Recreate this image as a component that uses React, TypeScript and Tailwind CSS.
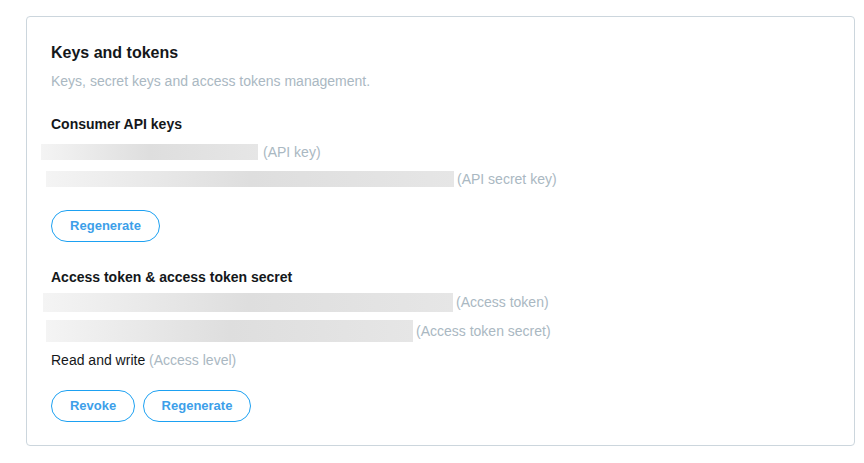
/**
 * Developer portal: "Keys and tokens" card with redacted credential rows.
 */

type RowProps = {
  offset: string;
  width: string;
  height: string;
  gap: string;
  label: string;
};

function Redacted({ offset, width, height, gap, label }: RowProps) {
  return (
    <div className="flex items-center">
      <div
        className={`${offset} ${width} ${height} shrink-0 bg-gradient-to-r from-[#f4f4f4] via-[#dedede] to-[#e6e6e6]`}
      />
      <span className={`${gap} whitespace-nowrap text-[14px] leading-5 text-[#aab8c2]`}>{label}</span>
    </div>
  );
}

function PillButton({ label, width }: { label: string; width: string }) {
  return (
    <button
      type="button"
      className={`${width} h-8 rounded-full border border-[#1da1f2] bg-white text-[13px] font-bold text-[#3d9fe9]`}
    >
      {label}
    </button>
  );
}

export default function App() {
  return (
    <div
      className="min-h-[463px] w-[864px] bg-white pl-[26px] pt-4"
      style={{ fontFamily: '"Liberation Sans", Arial, sans-serif' }}
    >
      <section className="h-[430px] w-[829px] rounded-[4px] border border-[#ccd6dd] bg-white px-6 pt-[26px]">
        <h2 className="text-[16px] font-bold leading-5 text-[#14171a]">Keys and tokens</h2>
        <p className="mt-2 text-[14px] leading-5 text-[#aab8c2]">
          Keys, secret keys and access tokens management.
        </p>

        <h3 className="mt-[23px] text-[14px] font-bold leading-5 text-[#14171a]">Consumer API keys</h3>
        <div className="mt-2 h-5">
          <Redacted offset="-ml-[10px]" width="w-[217px]" height="h-4" gap="ml-[5px]" label="(API key)" />
        </div>
        <div className="mt-[7px] h-5">
          <Redacted offset="-ml-[5px]" width="w-[408px]" height="h-4" gap="ml-[3px]" label="(API secret key)" />
        </div>
        <div className="mt-[21px]">
          <PillButton label="Regenerate" width="w-[109px]" />
        </div>

        <h3 className="mt-[25px] text-[14px] font-bold leading-5 text-[#14171a]">
          Access token &amp; access token secret
        </h3>
        <div className="mt-[5px] h-5">
          <Redacted offset="-ml-[8px]" width="w-[410px]" height="h-[19px]" gap="ml-[3px]" label="(Access token)" />
        </div>
        <div className="mt-2 h-[22px]">
          <Redacted
            offset="-ml-[5px]"
            width="w-[367px]"
            height="h-[22px]"
            gap="ml-[3px]"
            label="(Access token secret)"
          />
        </div>
        <p className="mt-2 text-[14px] leading-5 text-[#14171a]">
          Read and write <span className="text-[#aab8c2]">(Access level)</span>
        </p>
        <div className="mt-5 flex gap-2">
          <PillButton label="Revoke" width="w-[84px]" />
          <PillButton label="Regenerate" width="w-[108px]" />
        </div>
      </section>
    </div>
  );
}
